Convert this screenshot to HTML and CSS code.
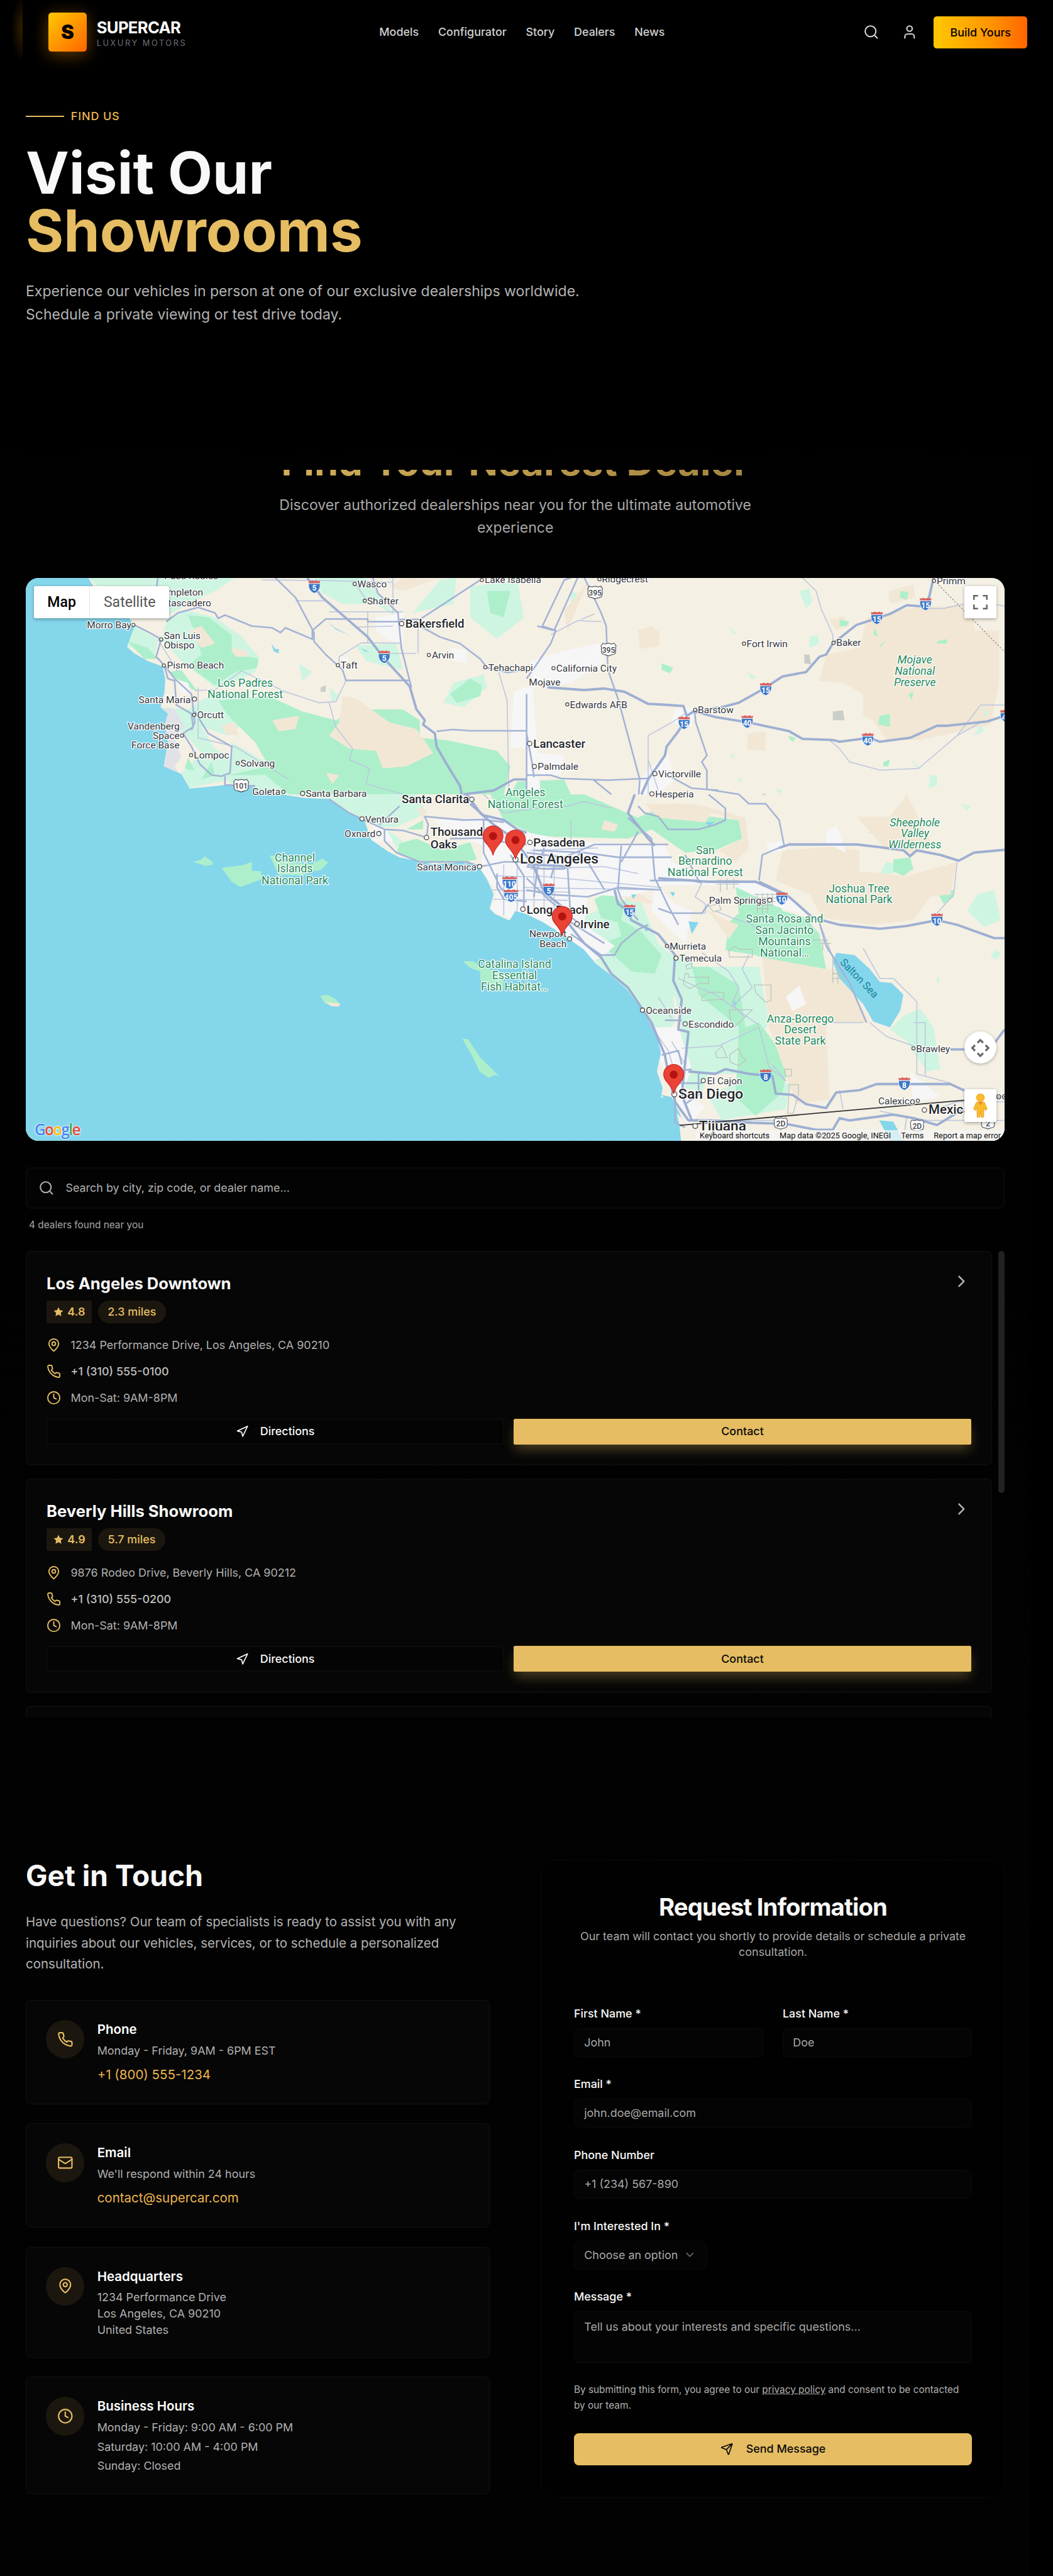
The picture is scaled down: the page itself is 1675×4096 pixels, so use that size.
FILE: index.html
```html
<!DOCTYPE html>
<html lang="en">
<head>
<meta charset="utf-8">
<title>Supercar Luxury Motors – Dealers</title>
<link rel="stylesheet" href="styles.css">
</head>
<body>
<svg class="defs" width="0" height="0" aria-hidden="true">
  <symbol id="i-search" viewBox="0 0 24 24"><circle cx="11" cy="11" r="8"/><path d="m21 21-4.3-4.3"/></symbol>
  <symbol id="i-user" viewBox="0 0 24 24"><path d="M19 21v-2a4 4 0 0 0-4-4H9a4 4 0 0 0-4 4v2"/><circle cx="12" cy="7" r="4"/></symbol>
  <symbol id="i-pin" viewBox="0 0 24 24"><path d="M20 10c0 4.99-5.54 10.19-7.4 11.8a1 1 0 0 1-1.2 0C9.54 20.19 4 14.99 4 10a8 8 0 0 1 16 0"/><circle cx="12" cy="10" r="3"/></symbol>
  <symbol id="i-phone" viewBox="0 0 24 24"><path d="M22 16.92v3a2 2 0 0 1-2.18 2 19.79 19.79 0 0 1-8.63-3.07 19.5 19.5 0 0 1-6-6 19.79 19.79 0 0 1-3.07-8.67A2 2 0 0 1 4.11 2h3a2 2 0 0 1 2 1.72 12.84 12.84 0 0 0 .7 2.81 2 2 0 0 1-.45 2.11L8.09 9.91a16 16 0 0 0 6 6l1.27-1.27a2 2 0 0 1 2.11-.45 12.84 12.84 0 0 0 2.81.7A2 2 0 0 1 22 16.92z"/></symbol>
  <symbol id="i-clock" viewBox="0 0 24 24"><circle cx="12" cy="12" r="10"/><path d="M12 6v6l4 2"/></symbol>
  <symbol id="i-mail" viewBox="0 0 24 24"><rect x="2" y="4" width="20" height="16" rx="2"/><path d="m22 7-8.97 5.7a1.94 1.94 0 0 1-2.06 0L2 7"/></symbol>
  <symbol id="i-nav" viewBox="0 0 24 24"><path d="M3 11 22 2l-9 19-2-8z"/></symbol>
  <symbol id="i-send" viewBox="0 0 24 24"><path d="M14.54 21.69a.5.5 0 0 0 .93-.03l6.5-19a.5.5 0 0 0-.63-.63l-19 6.5a.5.5 0 0 0-.03.93l7.93 3.18a2 2 0 0 1 1.11 1.11zM21.85 2.15 10.91 13.09"/></symbol>
  <symbol id="i-right" viewBox="0 0 24 24"><path d="m9 18 6-6-6-6"/></symbol>
  <symbol id="i-down" viewBox="0 0 24 24"><path d="m6 9 6 6 6-6"/></symbol>
  <symbol id="i-star" viewBox="0 0 24 24"><path d="m12 2 3.09 6.26L22 9.27l-5 4.87 1.18 6.88L12 17.77l-6.18 3.25L7 14.14 2 9.27l6.91-1.01z"/></symbol>
  <symbol id="shield" viewBox="0 0 16 17" overflow="visible"><path d="M1 4.5H15C16 10 13 14.500 8 16.500 3 14.500 0 10 1 4.500z" fill="#3b78c9" stroke="#f3f6fb" stroke-width=".7"/><path d="M1 4V.8L3 1.800 5 .5 8 1.500 11 .5 13 1.800 15 .8V4z" fill="#d9625f"/></symbol>
  <symbol id="us" viewBox="0 0 20 17" overflow="visible"><path d="M3 .7 6 1.700 10 .7 14 1.700 17 .7 19.300 4C17.500 7 20.500 11 17.500 14 14 15.500 12 15 10 16.500 8 15 6 15.500 2.500 14-.5 11 2.500 7 .7 4z" fill="#fff" stroke="#555b63" stroke-width="1"/></symbol>
  <symbol id="marker" viewBox="0 0 26 37" overflow="visible"><path d="M13 .5C6 .5 .5 6 .5 13 .5 22 10.500 25 13 37 15.500 25 25.500 22 25.500 13 25.500 6 20 .5 13 .5z" fill="#ea4335" stroke="#c5221f" stroke-width=".8"/><circle cx="13" cy="13" r="5" fill="#b31412"/></symbol>
</svg>

<header class="header">
  <span class="edge-glow"></span>
  <div class="brand">
    <div class="logo">S</div>
    <div class="brand-text"><b>SUPERCAR</b><span>LUXURY MOTORS</span></div>
  </div>
  <nav class="nav"><a>Models</a><a>Configurator</a><a>Story</a><a>Dealers</a><a>News</a></nav>
  <div class="actions">
    <span class="icon-btn"><svg class="icon s20"><use href="#i-search"/></svg></span>
    <span class="icon-btn"><svg class="icon s20"><use href="#i-user"/></svg></span>
    <a class="build">Build Yours</a>
  </div>
</header>

<main class="main">
  <section class="hero">
    <div class="eyebrow"><i></i>FIND US</div>
    <h1>Visit Our<br><span>Showrooms</span></h1>
    <p>Experience our vehicles in person at one of our exclusive dealerships worldwide. Schedule a private viewing or test drive today.</p>
  </section>

  <section class="dealers">
    <div class="section-head">
      <h2>Find Your Nearest Dealer</h2>
      <p>Discover authorized dealerships near you for the ultimate automotive experience</p>
    </div>

    <div class="map">
      <svg class="map-art" viewBox="0 0 1216 699" preserveAspectRatio="none">
        <rect width="1216" height="699" fill="#f5f0e4"/>
        <!-- upper half terrain -->
        <g class="terrain" transform="matrix(.41708 0 0 .27211 -32 -158)">
          <g class="lg">
            <path d="M263 580H700L640 640 560 700 490 760 400 760z"/>
            <path d="M400 800 470 860 460 950 380 890z"/>
            <path d="M500 760 560 730 640 760 720 850 770 940 760 1010 690 1060 640 1080 540 960 480 860z"/>
            <path d="M480 1170 560 1180 640 1100 740 1120 760 1200 680 1300 600 1260 640 1360 690 1400 680 1500 565 1540 540 1470 600 1380z"/>
            <path d="M930 580H1090L1180 760 1120 700 1020 700 960 650zM1060 890 1180 880 1200 1000 1090 960z"/>
            <path d="M1310 590 1360 580 1350 700 1230 740zM1400 620 1540 590 1560 760 1480 860 1400 760z"/>
            <path d="M1350 1060 1440 1020 1450 1080 1380 1170 1320 1150zM890 970 930 1010 900 1050zM980 1080 1010 1120 990 1150z"/>
            <path d="M690 1330 860 1480 960 1568H700L680 1500z"/>
          </g>
          <g class="gr">
            <path d="M560 750 620 760 690 840 690 920 770 950 765 990 700 1010 640 1070 560 980 600 930 580 830z"/>
            <path d="M380 870 440 900 470 950 430 950zM500 1010 560 1080 590 1100 540 1000z"/>
            <path d="M650 1140 800 1120 900 1190 1000 1230 1060 1180 1200 1180 1250 1230 1250 1310 1330 1320 1480 1370 1520 1440 1500 1568H860L790 1480 680 1480 800 1440 760 1330 680 1210z"/>
            <path d="M1400 1040 1435 1070 1430 1120 1360 1150 1340 1110zM1450 640 1520 640 1500 760 1460 740z"/>
            <path d="M560 1400 580 1460 550 1450zM630 1420 640 1480 600 1500zM1540 1510 1680 1500 1700 1568H1520z"/>
          </g>
          <g class="tan">
            <path d="M1020 1120 1060 1130 1160 1240 1240 1270 1290 1380 1210 1440 1140 1450 1120 1370 1040 1360 980 1300 1010 1240z"/>
            <path d="M810 1230 890 1210 880 1270 830 1280zM690 900 730 910 740 940 700 940zM660 1250 700 1240 710 1300 670 1290zM970 1470 1010 1480 990 1520zM560 820 600 800 640 880 600 900z"/>
            <path d="M1160 620 1200 580 1290 590 1200 640zM1900 820 1940 800 1964 830V890L1905 905z"/>
            <path d="M2460 930 2560 900 2580 760 2700 720 2900 700 2900 820 2975 820 2975 1060 2950 1250 2740 1320 2640 1320 2600 1230 2570 1210 2570 1110 2510 1060 2440 1050z"/>
            <path d="M2645 640 2720 610 2725 670 2650 700zM2470 770 2510 755 2530 800 2490 820zM2225 1290 2280 1280V1370L2225 1365zM1680 730 1750 600 1690 820z"/>
          </g>
          <g class="ur">
            <path d="M1120 760 1200 740 1200 880 1150 860 1120 820zM1340 900 1390 910 1390 970 1350 960zM1010 930 1040 950 1020 990zM1580 960 1640 930 1720 900 1790 880 1800 960 1700 1060 1560 1080 1530 1100 1520 1350 1568 1360 1568 1568H1610L1600 1380 1680 1390 1670 1480 1600 1490V1340z"/>
            <path d="M1900 1500 1990 1380 2010 1500 1960 1568H1900zM2010 1180 2070 1170 2060 1260 2000 1240zM520 1040 560 1060 570 1110 540 1110z"/>
          </g>
          <g class="base"><path d="M492 1170 520 1180 550 1260 520 1310 540 1400 520 1440 560 1540 490 1440 500 1330 490 1230z"/></g>
          <g class="grey"><path d="M955 1080 970 1070 970 1100 955 1100zM2395 930 2410 930 2415 975 2395 970zM2480 1190 2510 1185 2515 1230 2480 1230z"/></g>
          <g class="gr">
            <path d="M2680 640 2705 645 2700 680 2680 670zM2500 770 2530 780 2520 800 2500 800zM2605 810 2615 850 2600 840zM2620 890 2640 860 2620 900zM2790 870 2820 860 2820 880 2790 880zM2620 1210 2650 1200 2650 1260 2615 1250zM2705 1110 2720 1100 2715 1140zM2630 1420 2650 1410 2645 1440 2630 1440zM1970 970 2005 990 1995 1015 1970 1000zM2345 1300 2370 1310 2360 1330z"/>
          </g>
          <g class="lg">
            <path d="M2380 640 2410 630 2420 690 2400 720zM2410 850 2435 840 2440 880 2410 900zM2170 800 2190 830 2185 840zM2225 1010 2250 1030 2240 1045zM1700 640 1720 650 1700 700zM2180 1380 2190 1400 2175 1400zM2930 1180 2945 1190 2930 1220zM2920 1250 2930 1280 2900 1300zM2770 1480 2790 1480 2790 1530 2765 1540zM2710 1400 2740 1450 2730 1450zM2195 1490 2210 1500 2205 1520zM2310 1540 2330 1550 2320 1568z"/>
          </g>
          <g class="wt"><path d="M808 880 820 905H830V925L815 915zM975 780 1000 810 1045 845 1000 815zM1075 900 1100 920 1085 915zM950 760 972 780z"/></g>
        </g>
        <!-- lower half terrain -->
        <g class="terrain" transform="matrix(.41708 0 0 .2891 -32 268.7)">
          <g class="lg">
            <path d="M860 0H1240L1270 80 1180 140 1130 140 1040 80 980 20zM1150 150 1200 200 1180 230z"/>
            <path d="M1568 620 1900 430 1960 640 2010 700 2060 700 2080 850 2200 1000 2190 1200 2060 1200 2020 1140 2030 1000 2010 860 1940 1020 1850 800 1800 720 1730 650 1760 560z"/>
            <path d="M1700 620 1850 560 1900 700 2000 740 2010 980 1950 1060 1890 900 1830 790z"/>
            <path d="M2100 740 2260 740 2290 980 2260 1050 2120 1000zM2110 1300 2200 1230 2350 1240 2340 1350 2150 1400zM2040 1180 2110 1190 2090 1280 2040 1260z"/>
            <path d="M2690 950 2740 920 2780 1000 2800 1180 2760 1190 2700 1060 2650 1010zM2910 430 2960 410 2980 540 2930 570 2880 500zM2960 670 2980 680 2970 710 2950 700zM2640 290 2670 300 2660 340 2620 340zM2790 780 2800 790 2790 815zM2860 40 2890 50 2880 70z"/>
          </g>
          <g class="gr">
            <path d="M1460 0H1740L1900 100 1960 60 2030 80 2200 110 2210 190 2130 240 2040 250 1990 200 1940 150 1870 190 1600 180 1500 110z"/>
            <path d="M1190 210 1240 190 1320 240 1400 205 1420 280 1380 290 1250 295 1180 250zM1210 150 1260 110V150z"/>
            <path d="M1770 450 1810 420 1860 470 1850 540 1910 590 1970 690 1950 770 1880 760 1820 680 1790 640 1850 610 1840 550 1790 530z"/>
            <path d="M2190 390 2240 380 2310 440 2330 500 2400 530 2440 600 2460 750H2340L2250 690 2160 670 2170 550 2200 510z"/>
            <path d="M2060 740 2110 740 2200 820 2220 1000 2260 980 2350 1150 2330 1280 2250 1380 2190 1300 2200 1000 2080 860z"/>
            <path d="M2660 280 2710 270 2720 320 2690 350 2660 330zM2790 420 2840 410 2840 440 2810 470zM2660 380 2760 380 2750 390 2670 395zM2585 100 2600 100 2605 150 2590 170zM1750 350 1790 340 1780 400z"/>
          </g>
          <g class="tan">
            <path d="M1920 40 2060 40 2120 60 2220 100 2230 230 2190 290 2140 240 2210 190 2200 110 2120 80 2100 120 1960 100zM1800 110 1840 130 1830 160 1790 150zM1240 50 1270 70 1260 110z"/>
            <path d="M2330 240 2480 225 2560 240 2560 330 2700 350 2850 290 2830 430 2770 440 2720 540 2600 560 2450 530 2410 430 2310 370z"/>
            <path d="M2270 700 2460 750 2500 750 2540 840 2590 980 2460 980 2470 1310 2370 1330 2340 1200 2290 1000zM2550 95H2650L2700 0 2770 200 2740 250 2640 240zM2090 480 2160 540 2200 560 2170 620 2120 520zM1840 430 1900 420 1950 470 1880 460z"/>
          </g>
          <g class="ur">
            <path d="M1290 110 1420 100 1480 90 1560 160 1700 200 1980 220 2000 290 2120 370 2240 380 2340 430 2400 520 2310 480 2180 390 1980 390 1870 440 1750 430 1740 560 1830 650 1800 690 1760 720 1700 620 1620 550 1560 510 1530 540 1460 500 1480 430 1430 310 1440 220 1340 170z"/>
            <path d="M1950 380 2010 470 2060 500 2040 640 2010 600 1940 500zM1920 1000 2020 1000 2060 1180 2030 1280 2100 1340 2050 1430 2010 1290 1970 1160zM2280 210 2340 200 2340 240 2290 250zM2460 160 2490 130 2520 250 2460 210zM2340 870 2380 820 2400 900 2360 930zM1110 130 1150 150 1170 200 1110 200zM2710 1190 2800 1300 2720 1320z"/>
          </g>
        </g>
        <!-- ocean, islands and lakes -->
        <path class="wt" d="M77.700 0 89 19 128.600 50 135 60 130.700 72 125.700 85.500 134.800 93.700 151.500 103 170 110 173.200 125 172.400 141.300 167.400 160.400 176.500 168.500 172.400 182 176.500 204 171.500 233.800 193.200 243.400 203.700 261.600 247.400 257 280.800 259.700 318 268.700 345.500 273 376.700 274.500 401.800 291.800 420.500 300.500 428.900 325 449.700 339.500 464.300 346.800 506 355.400 547.800 352.500 562.300 358.300 572.800 374.200 581.100 393 576.100 410.400 583.200 417.600 600.700 425.400 608.200 413.300 622 417.600 642.900 427.700 667.900 443.600 692.900 461 707.500 478.300 726.300 492.800 747.100 511.500 765.900 537.600 782.600 563.600 788.800 589.600 783.800 612.700 790.900 633 788.800 644.500 805.500 650.300 811.800 679.200 813.900 699H0V0z"/>
        <g transform="matrix(.41708 0 0 .2891 -32 268.7)">
          <path class="gr" d="M575 290 600 280 610 266 633 290V302L612 307zM660 315 720 305 750 290V328L778 330V365L740 385 716 398 690 375zM803 262 830 265 850 290 930 300 960 275 977 293 955 325 930 330 900 348 830 345 815 300zM953 865 975 860 1000 880 1014 902 970 900zM1377 1050H1393L1430 1130 1487 1210 1475 1205 1455 1216 1428 1190 1405 1120zM1378 715 1410 717 1430 740 1480 760 1500 800 1498 845 1430 800V760L1400 745z"/>
          <path class="tan" d="M970 892 1010 897 1014 904 1005 912 985 909z"/>
          <path class="wt" d="M2490 680 2545 690 2590 750 2620 805 2655 810 2690 860 2680 930 2650 1000 2600 975 2570 900 2500 790 2480 720zM1915 570 1935 575 1925 590zM2050 545 2080 550 2060 600zM1880 430 1895 430 1885 450zM1995 420 2010 420 2005 440zM2100 120 2130 118 2110 135zM2180 885 2195 895 2190 910zM2618 1400 2660 1405 2690 1487H2650zM1968 1290 2000 1300 2030 1390 2010 1360z"/>
        </g>
        <!-- secondary roads -->
        <g class="rd thin" transform="matrix(.41708 0 0 .27211 -32 -158)">
          <path d="M580 1095 640 1090 720 1005 850 1100 950 1150 1000 1145 1030 1050M980 1150 1000 1260 1050 1360 1040 1410 1100 1450 1090 1520 1200 1568M470 860 530 1010M780 590 960 592 1170 600M1170 580 1170 740M880 685 970 685M1095 735V880M980 735H1200M1060 805 1170 800M1010 940 1075 877 1190 878M1010 940V980M1145 925H1240M1245 810V925M1055 600 1090 680M590 1080V1310L700 1350 860 1500"/>
          <path d="M1485 1010 1510 1140 1515 1568M2390 580 2430 640 2445 720 2480 840 2480 880M2270 1568 2280 1568M1640 840 1720 775 1790 780M1730 770 1770 745M2470 1320 2500 1360 2530 1420 2620 1457 2735 1450 2850 1300 2920 1240M2850 1300 2920 1160H2991M1930 1568 1930 1300 2000 1240 2040 1200M2750 720 2810 720 2870 700M2960 700 2991 710M1930 1410 1960 1550"/>
        </g>
        <g class="rd thin" transform="matrix(.41708 0 0 .2891 -32 268.7)">
          <path d="M1440 0 1500 80 1590 60 1690 50 1740 30 1820 60M1700 200V110M1580 240 1780 230M1580 320 1800 310 1900 340M1600 350 1970 400M1560 400 1960 410M1590 200V500M1620 200V500M1650 270V540M1500 300V520M1540 290V500M1470 350 1600 355M1460 410 1700 420M1470 450 1690 455M2050 510 2100 510V470L2070 440 2090 380M2090 680 2170 760 2200 830 2180 900 2220 960M2020 790 2080 830 2130 860 2190 920 2260 990M2180 910 2240 830 2210 750 2230 690M2130 500 2180 530 2240 560 2300 640 2290 700M2850 290 2840 430 2790 510M2440 550 2480 700 2510 750M2570 660 2620 790 2660 790 2730 890 2730 1200 2780 1220M2570 980H2480M2590 980 2640 1040 2720 1080M2500 1270 2510 1350M2720 980H2755V1210L2830 1240M2030 1090 2140 1080 2260 1000 2290 1170 2340 1230 2300 1160M2000 1060 2040 1160M1930 980 1990 1100 2020 1250M1960 870 2000 960M2620 1360 2760 1400 2991 1400M2790 1350 2850 1320H2991M2700 1380 2690 1487M2200 1400 2330 1400"/>
        </g>
        <!-- reservation outlines -->
        <g class="rsv" transform="matrix(.41708 0 0 .2891 -32 268.7)">
          <path d="M2170 670 2190 652 2200 665H2240V698H2172zM2246 818H2296V885L2280 893 2250 850zM2040 770H2050V785H2110V812H2080L2055 835 2035 815zM2090 870 2110 850 2155 850V880L2090 885zM2172 925H2240L2215 960 2185 1000 2175 970zM2130 1110 2150 1080 2165 1130 2135 1130zM2172 1120 2200 1090 2210 1130 2222 1140 2200 1165 2175 1150zM2336 1180H2356V1210H2340zM2350 1247H2378V1280L2362 1370H2346zM2042 735 2060 725V745L2045 750zM2110 480 2140 470 2148 495 2125 505z"/>
          <path d="M2246 430H2310M2246 445H2310M2246 460H2310M2250 475H2300M2252 490H2290M2255 425V510M2270 425V515M2285 425V510M2300 425V480M2480 690V810M2495 750V815M2478 770H2510M2478 790H2515M2132 370H2200M2132 385H2200M2145 365V420M2165 360V410M2185 360V405M2420 625H2465M2440 640H2475M2450 625V670M2465 640V675"/>
        </g>
        <!-- highways -->
        <g class="rd" transform="matrix(.41708 0 0 .27211 -32 -158)">
          <path d="M470 580 465 640M400 795 445 830 480 860 465 940 490 980 520 1040 570 1110 580 1240 570 1275M490 985 500 1040 520 1050 525 1160 570 1200 575 1260 545 1290 570 1350 595 1430 630 1480 660 1485 685 1470 690 1350 620 1290 580 1190M495 780 530 740 590 715 640 740 650 765 670 750 750 800 810 808 835 830 850 808 930 860 930 820 970 768H1095V780H1190M820 580 880 670 935 830 935 870 970 930 1020 1000 1030 1048H1220M670 1485V1525L760 1530M1110 580 1125 650 1185 740 1195 900 1225 1080M1190 770 1250 770 1310 710 1360 660 1430 590M1250 800 1310 850 1370 880 1430 950 1450 990 1510 1012 1568 1000M1300 1280 1350 1272 1400 1278H1568M1568 1110V1568M1600 800 1650 820 1720 580M1700 580 1680 590 1615 800 1655 820 1640 880 1600 970 1568 1040M1740 580 1790 740 1805 800 1810 1000 1840 1130 1905 1500 1902 1568M1568 1290 1585 1430 1590 1490M1568 1480 1640 1480 1670 1495 1810 1503 1930 1495M2068 1190 2072 1240 2105 1390 2090 1420 2105 1460V1545L2200 1568M2000 1490 2060 1540 2140 1550M1768 1503 1820 1568"/>
        </g>
        <g class="rd" transform="matrix(.41708 0 0 .2891 -32 268.7)">
          <path d="M980 20 1040 80 1100 120 1145 150 1200 155 1270 185M1145 150V200L1180 250 1250 290 1390 290 1430 310M1130 130 1190 50M1270 185 1275 130 1265 95 1380 110 1440 108 1500 120M1340 190 1440 188 1500 205 1568 215M1440 110V250L1470 340 1490 400 1530 450M1430 310 1500 290 1568 290M1520 260 1560 350V500M1480 340V400L1500 450 1568 460M1568 250 1680 270 1770 215H1990M1590 240 1740 250 1840 270H2000M1568 410 1640 430 1750 440 1840 400 1970 410M1568 310 1620 320 1680 320 1730 250M1690 310 1700 550 1800 640M1568 360 1640 460 1730 560M1620 230 1600 320 1590 440M1660 260 1640 360M1750 290 1800 410M1850 220 1840 410 1850 450 1900 540M1900 160 1850 290M1870 100 1940 190 1950 360 1990 480 2020 560M1900 50 1920 80 1960 95 1990 150 2080 150 2130 130 2160 110 2160 60 2110 0M1935 370 2060 370 2090 380M2040 260 2080 370M2200 0 2230 40 2280 40 2320 110 2335 220 2270 260 2260 370M1700 600 1790 690 1830 690 1850 640 1900 580 1930 560M1960 490 2000 510 2090 510 2110 470M1980 970 2000 970 2030 970M1970 1120 2020 1100 2030 1160M2010 1190 2060 1180M1990 1240 2090 1240M2010 1210V1410L2040 1430M2080 1190V1290L2040 1330M2440 550 2460 650 2530 810 2580 980"/>
        </g>
        <g class="rd wide" transform="matrix(.41708 0 0 .27211 -32 -158)">
          <path d="M915 580 960 670 1095 850 1145 950 1220 1075 1240 1180 1265 1230 1260 1250 1295 1290 1300 1350 1330 1430 1370 1530 1375 1568M1380 1568 1470 1550 1530 1500 1568 1500M1630 1080 1740 1092 1800 1085 1860 1100 1930 1155 1970 1158 2035 1165 2045 1210 2070 1185 2150 1170 2200 1150 2270 1090 2330 1030 2400 1010 2440 940 2460 930 2480 880 2550 795 2650 745 2700 705 2760 712 2780 580M2070 1190 2130 1215 2230 1240 2350 1280 2390 1315 2480 1320 2500 1328 2590 1310 2620 1328 2710 1310 2790 1255H2820L2940 1235 2991 1210M2045 1220 2020 1280 1985 1350 1980 1390 1930 1500 1910 1568"/>
        </g>
        <g class="rd wide" transform="matrix(.41708 0 0 .2891 -32 268.7)">
          <path d="M1390 0 1430 80 1470 130 1530 190 1590 310 1620 420 1690 500 1690 550 1740 640 1790 700 1820 770 1870 830 1940 980 1980 1120 1990 1200 2010 1320 2050 1400 2110 1400 2240 1410M1400 40 1440 90 1500 110 1540 150 1568 165M1570 300 1700 310M1890 0 1870 80 1930 190 1950 220M1960 360 2110 375 2250 375 2350 440 2420 530 2500 560 2620 577 2700 565 2790 540 2850 560 2960 617H2991M2260 375 2340 430M2320 230 2350 215H2550L2610 225 2690 240 2710 265 2730 240 2800 260 2855 285 2900 250 2991 238M1830 410 1840 470 1870 500 1880 540 1960 600 2010 690 2005 800 2030 880 2020 1010 2050 1020 2030 1290 2060 1400M2050 1190 2130 1200 2160 1180 2230 1200 2300 1210 2310 1285 2360 1290 2400 1330 2460 1347 2490 1280 2560 1270 2610 1244H2830L2900 1290M2240 1410 2340 1415 2430 1440 2480 1440 2500 1390 2530 1400 2660 1375 2720 1390 2790 1420 2870 1350M2940 1110 2991 1010M2830 1095H2890"/>
        </g>
        <path d="M812 679.500 1216 644" stroke="#333" stroke-width="1.400" fill="none"/>
        <path d="M1131 6 1216 92" stroke="#8a8a8a" stroke-dasharray="2 2" fill="none"/>

        <g class="dots">
          <circle cx="133.600" cy="58.300" r="2"/><circle cx="168.200" cy="76.300" r="2"/><circle cx="171.500" cy="108.700" r="2"/><circle cx="209.500" cy="150.300" r="2.600"/><circle cx="209" cy="170" r="2"/><circle cx="194" cy="195.700" r="2"/><circle cx="205.300" cy="220" r="2"/><circle cx="263.300" cy="230" r="2"/><circle cx="320" cy="265.500" r="2"/><circle cx="343.800" cy="267.500" r="2.600"/><circle cx="408.400" cy="7.400" r="2"/><circle cx="421" cy="28.300" r="2"/><circle cx="466.800" cy="56.700" r="2.800"/><circle cx="500.600" cy="95.600" r="2"/><circle cx="387.600" cy="108.300" r="2"/><circle cx="570.700" cy="110.800" r="2"/><circle cx="566.500" cy="2.500" r="2"/>
          <circle cx="712.500" cy="1.500" r="2"/><circle cx="1128" cy="3.500" r="2"/><circle cx="892" cy="81.500" r="2"/><circle cx="1003.200" cy="80.500" r="2"/><circle cx="655.400" cy="112" r="2"/><circle cx="672.500" cy="157" r="2"/><circle cx="831.400" cy="163.700" r="2"/><circle cx="625.800" cy="205.500" r="2.800"/><circle cx="631.600" cy="234" r="2.600"/><circle cx="781.300" cy="243" r="2.600"/><circle cx="777.600" cy="268" r="2.600"/>
          <circle cx="417.600" cy="299" r="2.600"/><circle cx="438.500" cy="317.300" r="2.600"/><circle cx="554" cy="274.800" r="2.800"/><circle cx="497.700" cy="322.200" r="2.800"/><circle cx="563.600" cy="358.300" r="2.600"/><circle cx="608.200" cy="349.400" r="3.200"/><circle cx="626.200" cy="328.300" r="2.800"/><circle cx="617.400" cy="411.200" r="2.800"/><circle cx="684.600" cy="429.500" r="2.800"/><circle cx="675.400" cy="448" r="2.600"/><circle cx="924" cy="400" r="2.600"/><circle cx="796.300" cy="457" r="2"/><circle cx="807.600" cy="472" r="2.600"/><circle cx="765.900" cy="536.500" r="2.600"/><circle cx="818.900" cy="553.500" r="2.600"/><circle cx="841.400" cy="624" r="2.600"/><circle cx="805.500" cy="641" r="3.200"/><circle cx="831.400" cy="680.400" r="3"/><circle cx="1102.500" cy="584" r="2"/><circle cx="1107.900" cy="649" r="2"/><circle cx="1116" cy="660.500" r="2.800"/>
        </g>
        <g class="lb">
          <text x="172" y="1.700">Paso Robles</text><text x="220.300" y="22.100" class="e">Templeton</text><text x="230.300" y="35.200" class="e">Atascadero</text><text x="131" y="62.400" class="e">Morro Bay</text><text x="171.500" y="75.500">San Luis</text><text x="171.500" y="87.500">Obispo</text><text x="175.300" y="112.500">Pismo Beach</text><text x="204.900" y="155" class="e">Santa Maria</text><text x="212.800" y="174.200">Orcutt</text><text x="191.100" y="187.900" class="e">Vandenberg</text><text x="191.100" y="199.800" class="e">Space</text><text x="191.100" y="211.800" class="e">Force Base</text><text x="208.700" y="224.300">Lompoc</text><text x="266.600" y="234.100">Solvang</text><text x="316.300" y="269.300" class="e">Goleta</text><text x="347.600" y="272.100">Santa Barbara</text><text x="411.800" y="11.800">Wasco</text><text x="423.900" y="32.500">Shafter</text><text x="504.400" y="100">Arvin</text><text x="390.900" y="112.700">Taft</text><text x="574.400" y="115.200">Tehachapi</text><text x="569.900" y="6.600">Lake Isabella</text>
          <text x="715.400" y="5.800">Ridgecrest</text><text x="1131.300" y="7.700">Primm</text><text x="895.200" y="85.800">Fort Irwin</text><text x="1006.600" y="84.700">Baker</text><text x="658.700" y="116.300">California City</text><text x="624.900" y="133.700">Mojave</text><text x="675.800" y="161.500">Edwards AFB</text><text x="834.700" y="168">Barstow</text><text x="635.800" y="238.200">Palmdale</text><text x="785.500" y="247.200">Victorville</text><text x="781.700" y="272.200">Hesperia</text>
          <text x="421.400" y="304">Ventura</text><text x="434.300" y="321.900" class="e">Oxnard</text><text x="559.800" y="362.700" class="e">Santa Monica</text><text x="671.600" y="445.900" class="e">Newport</text><text x="671.600" y="458" class="e">Beach</text><text x="919.800" y="404.600" class="e">Palm Springs</text><text x="799.700" y="461.500">Murrieta</text><text x="811.800" y="476.300">Temecula</text><text x="770" y="541">Oceanside</text><text x="823" y="558.100">Escondido</text><text x="846" y="628.300">El Cajon</text><text x="1105.800" y="588.700">Brawley</text><text x="1104.600" y="653.500" class="e">Calexico</text><text x="1205" y="647">ood</text>
        </g>
        <g class="lb md">
          <text x="471.400" y="61.900">Bakersfield</text><text x="630.300" y="210.700">Lancaster</text><text x="550.700" y="279.700" class="e">Santa Clarita</text><text x="502.700" y="320.400">Thousand</text><text x="502.700" y="335.500">Oaks</text><text x="630.300" y="333.500">Pasadena</text><text x="622" y="416.700">Long Beach</text><text x="688.700" y="434.900">Irvine</text>
        </g>
        <g class="lb lgc"><text x="613.600" y="354.600">Los Angeles</text><text x="810.500" y="646.800">San Diego</text><text x="836" y="686.300">Tijuana</text><text x="1121.200" y="665.600" class="mx">Mexicali</text></g>
        <g class="lb park">
          <text x="272.500" y="135">Los Padres</text><text x="272.500" y="149.200">National Forest</text><text x="620.500" y="271">Angeles</text><text x="620.500" y="285.500">National Forest</text><text x="334.200" y="352">Channel</text><text x="334.200" y="365.800">Islands</text><text x="334.200" y="380">National Park</text><text x="607" y="484.400">Catalina Island</text><text x="607" y="498.200">Essential</text><text x="607" y="512.400">Fish Habitat…</text><text x="843.900" y="342.400">San</text><text x="843.900" y="356.300">Bernardino</text><text x="843.900" y="370.200">National Forest</text><text x="1034.900" y="390.100">Joshua Tree</text><text x="1034.900" y="403.700">National Park</text><text x="942.300" y="427.700">Santa Rosa and</text><text x="942.300" y="441.600">San Jacinto</text><text x="942.300" y="455.700">Mountains</text><text x="942.300" y="469.900">National…</text><text x="961.900" y="551.700">Anza-Borrego</text><text x="961.900" y="565.600">Desert</text><text x="961.900" y="579.500">State Park</text>
          <g font-style="italic"><text x="1104.200" y="106.200">Mojave</text><text x="1104.200" y="120.400">National</text><text x="1104.200" y="134.500">Preserve</text><text x="1104.200" y="308.300">Sheephole</text><text x="1104.200" y="321.900">Valley</text><text x="1104.200" y="336">Wilderness</text></g>
        </g>
        <text class="salton" transform="translate(1032 500) rotate(46)">Salton Sea</text>
        <g class="sh">
          <g transform="translate(358.400 11)"><use href="#shield" x="-8" y="-8.500" width="16" height="17"/><text y="5">5</text></g>
          <g transform="translate(445.200 98)"><use href="#shield" x="-8" y="-8.500" width="16" height="17"/><text y="5">5</text></g>
          <g transform="translate(1117.500 32.500)"><use href="#shield" x="-8" y="-8.500" width="16" height="17"/><text y="5">15</text></g>
          <g transform="translate(1057 49.700)"><use href="#shield" x="-8" y="-8.500" width="16" height="17"/><text y="5">15</text></g>
          <g transform="translate(919 138)"><use href="#shield" x="-8" y="-8.500" width="16" height="17"/><text y="5">15</text></g>
          <g transform="translate(817.600 180)"><use href="#shield" x="-8" y="-8.500" width="16" height="17"/><text y="5">15</text></g>
          <g transform="translate(896 178.500)"><use href="#shield" x="-8" y="-8.500" width="16" height="17"/><text y="5">40</text></g>
          <g transform="translate(1045.800 200.500)"><use href="#shield" x="-8" y="-8.500" width="16" height="17"/><text y="5">40</text></g>
          <g transform="translate(1217.500 171.500)"><use href="#shield" x="-8" y="-8.500" width="16" height="17"/><text y="5">40</text></g>
          <g transform="translate(600.700 378.500) scale(1.250 1)"><use href="#shield" x="-8" y="-8.500" width="16" height="17"/></g><text x="600.700" y="383.500">110</text>
          <g transform="translate(602.800 394.700) scale(1.250 1)"><use href="#shield" x="-8" y="-8.500" width="16" height="17"/></g><text x="602.800" y="399.700">405</text>
          <g transform="translate(649.500 387)"><use href="#shield" x="-8" y="-8.500" width="16" height="17"/><text y="5">5</text></g>
          <g transform="translate(750 413.500)"><use href="#shield" x="-8" y="-8.500" width="16" height="17"/><text y="5">15</text></g>
          <g transform="translate(939 398)"><use href="#shield" x="-8" y="-8.500" width="16" height="17"/><text y="5">10</text></g>
          <g transform="translate(1131.700 424.300)"><use href="#shield" x="-8" y="-8.500" width="16" height="17"/><text y="5">10</text></g>
          <g transform="translate(919 618)"><use href="#shield" x="-8" y="-8.500" width="16" height="17"/><text y="5">8</text></g>
          <g transform="translate(1091.200 628)"><use href="#shield" x="-8" y="-8.500" width="16" height="17"/><text y="5">8</text></g>
        </g>
        <g class="sh dark">
          <g transform="translate(267.500 257.800)"><use href="#us" x="-10" y="-8.500" width="20" height="17"/><text y="4">101</text></g>
          <g transform="translate(707.100 18)"><use href="#us" x="-10" y="-8.500" width="20" height="17"/><text y="4">395</text></g>
          <g transform="translate(723.800 88.800)"><use href="#us" x="-10" y="-8.500" width="20" height="17"/><text y="4">395</text></g>
          <g transform="translate(937.700 677.200)"><use href="#us" x="-9" y="-8.500" width="18" height="17"/><text y="4">2D</text></g>
          <g transform="translate(1107 679.800)"><use href="#us" x="-9" y="-8.500" width="18" height="17"/><text y="4">2D</text></g>
          <g transform="translate(1195 676.900)"><use href="#us" x="-9" y="-8.500" width="18" height="17"/><text y="4">2</text></g>
        </g>
        <use href="#marker" x="567.300" y="307.400" width="26" height="37"/>
        <use href="#marker" x="595.200" y="312.400" width="26" height="37"/>
        <use href="#marker" x="653.200" y="407.200" width="26" height="37"/>
        <use href="#marker" x="791.700" y="603.500" width="26" height="37"/>
      </svg>
      <div class="map-type"><b>Map</b><span>Satellite</span></div>
      <div class="map-btn full"><svg viewBox="0 0 18 18" width="18" height="18"><path d="M0 0v6h2V2h4V0zM16 0h-4v2h4v4h2V0zM16 16h-4v2h6v-6h-2zM2 12H0v6h6v-2H2z" fill="#666"/></svg></div>
      <div class="map-btn pan"><svg viewBox="0 0 24 24" width="24" height="24"><path d="M8.500 5.500 12 2l3.500 3.500M8.500 18.500 12 22l3.500-3.500M5.500 8.500 2 12l3.500 3.500M18.500 8.500 22 12l-3.500 3.500" fill="none" stroke="#666" stroke-width="2.400"/></svg></div>
      <div class="map-btn peg"><svg viewBox="0 0 18 30" width="18" height="30"><circle cx="9" cy="5" r="5" fill="#fbbc2c" stroke="#e2942c" stroke-width=".6"/><path d="M4 10.500H14L17.500 19 15.500 21 13.500 18 13 29.500H9.800L9 21 8.200 29.500H5L4.500 18 2.500 21 .5 19z" fill="#fbbc2c" stroke="#e2942c" stroke-width=".6"/><path d="M6 10.500h6l-3 3.500z" fill="#e98a2c"/></svg></div>
      <div class="google"><i class="b">G</i><i class="r">o</i><i class="y">o</i><i class="b">g</i><i class="n">l</i><i class="r">e</i></div>
      <div class="credits"><span>Keyboard shortcuts</span><span>Map data ©2025 Google, INEGI</span><span>Terms</span><span>Report a map error</span></div>
    </div>

    <div class="search"><svg class="icon s20"><use href="#i-search"/></svg><span>Search by city, zip code, or dealer name...</span></div>
    <div class="count">4 dealers found near you</div>

    <div class="list-wrap">
      <div class="list">
        <article class="dealer">
          <div class="dealer-head"><h3>Los Angeles Downtown</h3><svg class="icon s24"><use href="#i-right"/></svg></div>
          <div class="chips"><span class="rating"><svg><use href="#i-star"/></svg>4.8</span><span class="dist">2.3 miles</span></div>
          <ul><li><svg class="icon s18"><use href="#i-pin"/></svg>1234 Performance Drive, Los Angeles, CA 90210</li><li class="tel"><svg class="icon s18"><use href="#i-phone"/></svg>+1 (310) 555-0100</li><li><svg class="icon s18"><use href="#i-clock"/></svg>Mon-Sat: 9AM-8PM</li></ul>
          <div class="btns"><a class="dir"><svg class="icon s16"><use href="#i-nav"/></svg>Directions</a><a class="contact">Contact</a></div>
        </article>
        <article class="dealer">
          <div class="dealer-head"><h3>Beverly Hills Showroom</h3><svg class="icon s24"><use href="#i-right"/></svg></div>
          <div class="chips"><span class="rating"><svg><use href="#i-star"/></svg>4.9</span><span class="dist">5.7 miles</span></div>
          <ul><li><svg class="icon s18"><use href="#i-pin"/></svg>9876 Rodeo Drive, Beverly Hills, CA 90212</li><li class="tel"><svg class="icon s18"><use href="#i-phone"/></svg>+1 (310) 555-0200</li><li><svg class="icon s18"><use href="#i-clock"/></svg>Mon-Sat: 9AM-8PM</li></ul>
          <div class="btns"><a class="dir"><svg class="icon s16"><use href="#i-nav"/></svg>Directions</a><a class="contact">Contact</a></div>
        </article>
        <article class="dealer"></article>
      </div>
      <div class="thumb"></div>
    </div>
  </section>

  <section class="contact-section">
    <div class="touch">
      <h2>Get in Touch</h2>
      <p class="lead">Have questions? Our team of specialists is ready to assist you with any inquiries about our vehicles, services, or to schedule a personalized consultation.</p>
      <div class="info"><span class="disc"><svg class="icon s20"><use href="#i-phone"/></svg></span><div><h4>Phone</h4><p>Monday - Friday, 9AM - 6PM EST</p><a>+1 (800) 555-1234</a></div></div>
      <div class="info"><span class="disc"><svg class="icon s20"><use href="#i-mail"/></svg></span><div><h4>Email</h4><p>We'll respond within 24 hours</p><a>contact@supercar.com</a></div></div>
      <div class="info"><span class="disc"><svg class="icon s20"><use href="#i-pin"/></svg></span><div><h4>Headquarters</h4><p>1234 Performance Drive<br>Los Angeles, CA 90210<br>United States</p></div></div>
      <div class="info"><span class="disc"><svg class="icon s20"><use href="#i-clock"/></svg></span><div class="hours"><h4>Business Hours</h4><p>Monday - Friday: 9:00 AM - 6:00 PM</p><p>Saturday: 10:00 AM - 4:00 PM</p><p>Sunday: Closed</p></div></div>
    </div>
    <form class="form">
      <div class="form-head"><h2>Request Information</h2><p>Our team will contact you shortly to provide details or schedule a private consultation.</p></div>
      <div class="row"><div class="field"><label>First Name *</label><div class="input">John</div></div><div class="field"><label>Last Name *</label><div class="input">Doe</div></div></div>
      <div class="field"><label>Email *</label><div class="input">john.doe@email.com</div></div>
      <div class="field"><label>Phone Number</label><div class="input">+1 (234) 567-890</div></div>
      <div class="field"><label>I'm Interested In *</label><div class="input select">Choose an option<svg class="icon s16"><use href="#i-down"/></svg></div></div>
      <div class="field"><label>Message *</label><div class="input area">Tell us about your interests and specific questions...</div></div>
      <p class="legal">By submitting this form, you agree to our <u>privacy policy</u> and consent to be contacted by our team.</p>
      <a class="send"><svg class="icon s16"><use href="#i-send"/></svg>Send Message</a>
    </form>
  </section>
</main>
</body>
</html>
```
FILE: styles.css
```css
*{box-sizing:border-box;margin:0;padding:0}
html{background:#000;overflow:hidden}
body{width:1308px;height:3198px;zoom:1.2808;background:#000;color:#f8f8f8;font-family:Inter,"Liberation Sans",sans-serif;font-size:14px;line-height:20px;overflow:hidden}
.defs{display:block;height:0}
ul{list-style:none}
.icon{fill:none;stroke:currentColor;stroke-width:2;stroke-linecap:round;stroke-linejoin:round;flex:none;display:block}
.s16{width:16px;height:16px}.s18{width:18px;height:18px}.s20{width:20px;height:20px}.s24{width:24px;height:24px}

/* header */
.header{position:relative;height:80px;display:grid;grid-template-columns:411px auto 1fr;align-items:center;padding:0 32px 0 60px}
.edge-glow{position:absolute;left:0;top:0;width:28px;height:80px;background:radial-gradient(ellipse 14px 42px at 28px 36px,rgba(255,150,0,.2),transparent)}
.brand{display:flex;align-items:center;gap:12px}
.logo{width:48px;height:48px;border-radius:4px;background:linear-gradient(135deg,#ffc800,#ff6600);box-shadow:0 4px 20px rgba(255,149,0,.4);color:#000;font-size:24px;font-weight:900;display:flex;align-items:center;justify-content:center}
.brand-text{display:flex;flex-direction:column}
.brand-text b{font-size:20px;line-height:28px;letter-spacing:-.5px;color:#fff}
.brand-text span{font-size:10px;line-height:12px;letter-spacing:2px;color:#6f6f7a}
.nav{display:flex;gap:24px;font-weight:500;color:#d0d0d0}
.actions{display:flex;justify-content:flex-end;align-items:center;gap:12px;color:#d4d4d4}
.icon-btn{width:36px;height:36px;display:flex;align-items:center;justify-content:center}
.build{width:116.400px;height:40px;text-align:center;border-radius:4px;background:linear-gradient(90deg,#ffc800,#ff9500 60%,#ff6600);color:#000;font-weight:500;line-height:40px}

.main{width:1280px;height:3118px;background:linear-gradient(#000 15%,#020202 75%)}
.hero{padding:54.5px 32px 0}
.eyebrow{display:flex;align-items:center;gap:8px;color:#edb54c;font-weight:500;letter-spacing:.7px;margin-bottom:24px}
.eyebrow i{width:48px;height:1px;background:#e6bd62}
h1{font-size:72px;line-height:72px;font-weight:700}
h1 span{color:#e6bd62}
.hero p{width:700px;margin-top:24.600px;font-size:18px;line-height:29.25px;color:#b3b3b3}

/* dealer finder */
.dealers{padding:178px 32px 0}
.section-head{overflow:hidden;text-align:center;height:134.100px}
.section-head h2{margin:-34.400px auto 16.500px;width:672px;font-size:48px;line-height:48px;font-weight:700;background:linear-gradient(90deg,#d6b05b,#a0833f);-webkit-background-clip:text;background-clip:text;color:transparent}
.section-head p{width:640px;margin:0 auto;font-size:18px;line-height:28px;color:#a8a8a8}

.map{position:relative;height:699px;border-radius:16px;overflow:hidden;background:#84d6eb;font-family:Roboto,sans-serif}
.map-art{display:block;width:100%;height:100%}
.terrain .lg{fill:#cef5e2}.gr{fill:#adefcb}.tan{fill:#f2e7d5}.ur{fill:#f6f6f7}.base{fill:#e0e2e8}.grey{fill:#c9cec9}.wt{fill:#84d6eb}
.rd path{fill:none;stroke:#a3b3d5;stroke-width:2px;vector-effect:non-scaling-stroke;stroke-linejoin:round}
.rd.thin path{stroke:#bac7df;stroke-width:1.200px}
.rd.wide path{stroke:#9dafd2;stroke-width:3px}
.rsv path{fill:none;stroke:#b9c4bd;stroke-width:1px;vector-effect:non-scaling-stroke}
.dots circle{fill:#fff;stroke:#555;stroke-width:1.100}
.lb{font-size:12.100px;fill:#33363b;stroke:#fff;stroke-width:2px;paint-order:stroke;stroke-linejoin:round}
.lb .e{text-anchor:end}
.lb.md{font-size:14.600px;font-weight:500;fill:#222528}
.lb.lgc{font-size:17.800px;font-weight:500;fill:#222528}
.lb .mx{font-size:16px}
.lb.park{font-size:13.800px;fill:#1f8a5d;text-anchor:middle}
.salton{font-size:13px;fill:#17829b;text-anchor:middle}
.sh{font-size:9.500px;font-weight:700;fill:#fff;text-anchor:middle}
.sh.dark{fill:#40454c;font-weight:500}
.map-type{position:absolute;left:10px;top:10px;width:168px;height:40px;border-radius:2px;background:#fff;box-shadow:0 1px 4px rgba(0,0,0,.3);display:flex;font-size:18px;line-height:40px;text-align:center;color:#565656}
.map-type b{width:70px;font-weight:500;color:#000;border-right:1px solid #e6e6e6}
.map-type span{flex:1}
.map-btn{position:absolute;left:1165.500px;width:40px;height:40px;border-radius:2px;background:#fff;box-shadow:0 1px 4px rgba(0,0,0,.3);display:flex;align-items:center;justify-content:center}
.full{top:10px}.pan{top:563px;border-radius:50%}.peg{top:635px}
.google{position:absolute;left:11px;top:673px;font:600 19px/24px "Open Sans",sans-serif;letter-spacing:-1.300px;text-shadow:0 0 2px #fff,0 0 2px #fff}
.google i{font-style:normal}
.google .b{color:#4285f4}.google .r{color:#ea4335}.google .y{color:#fbbc05}.google .n{color:#34a853}
.credits{position:absolute;right:0;bottom:0;height:14px;padding:0 5px;display:flex;gap:12.500px;background:rgba(245,245,245,.75);color:#111;font-size:10px;line-height:14px;white-space:nowrap}

.search{margin-top:32.300px;height:52px;border:2px solid #0a0a0a;border-radius:6px;background:#030303;display:flex;align-items:center;gap:14px;padding:0 14px;color:#b0b0b0}
.count{margin:12px 0 23.700px;padding-left:4px;font-size:12px;line-height:16px;color:#a6a6a6}
.list-wrap{display:flex;justify-content:space-between;align-items:flex-start;height:580px;overflow:hidden}
.list{width:1200px;display:flex;flex-direction:column;gap:16px}
.thumb{width:8px;height:301px;border-radius:4px;background:#222}
.dealer{height:266.600px;flex:none;border:2px solid #0c0c0c;border-radius:6px;background:#060606;padding:24.300px}
.dealer-head{display:flex;justify-content:space-between;align-items:flex-start;height:28px}
.dealer h3{font-size:20px;line-height:29px;font-weight:700;color:#fafafa}
.dealer-head svg{color:#b3b3b3}
.chips{display:flex;gap:8px;margin:8px 0 17.500px;color:#e6bd62;line-height:28px;font-weight:500}
.chips span{height:28px;padding:0 12px;border-radius:14px;background:#1b170f}
.chips .rating{display:flex;align-items:center;gap:4px;padding:0 8px;border-radius:2px;font-weight:600}
.rating svg{width:14px;height:14px;fill:#e6bd62}
.dealer ul{display:flex;flex-direction:column;gap:12.800px;color:#b0b0b0}
.dealer li{display:flex;align-items:center;gap:12px}
.dealer li svg{color:#e6bd62}
.dealer .tel{color:#c0c0c0;font-weight:500}
.btns{display:grid;grid-template-columns:1fr 1fr;gap:12px;margin-top:15.500px;font-weight:500}
.btns a{height:32px;border-radius:2px;display:flex;align-items:center;justify-content:center;gap:14px}
.dir{border:2px solid #0b0b0b;background:#040404}
.contact{background:#e6bd62;color:#0a0a0a;box-shadow:0 8px 16px -2px rgba(230,189,98,.32)}

/* contact */
.contact-section{display:grid;grid-template-columns:576px 576px;gap:64px;padding:176.300px 32px 0;align-items:start}
.touch h2{font-size:36px;line-height:40px;font-weight:700;margin-bottom:24px}
.lead{font-size:16px;line-height:26px;color:#b3b3b3;margin-bottom:32px}
.info{display:flex;gap:16px;padding:24px;border:1px solid #111;border-radius:6px;background:#060606;margin-bottom:23.800px}
.disc{width:48px;height:48px;border-radius:50%;background:#1b170f;color:#e6bd62;display:flex;align-items:center;justify-content:center}
.info h4{font-size:16px;line-height:24px;font-weight:600;color:#fff;margin-bottom:4px}
.info p{color:#b0b0b0}
.info a{display:block;margin-top:8px;font-size:16px;line-height:24px;color:#edb54c}
.hours p+p{margin-top:4px}
.form{border:1px solid #0a0a0a;border-radius:16px;background:#010101;padding:40px;display:flex;flex-direction:column;gap:24px}
.form-head{text-align:center;margin-bottom:32px;color:#a8a8a8}
.form-head h2{font-size:30px;line-height:36px;font-weight:700;letter-spacing:-.75px;color:#f8f8f8;margin-bottom:8px}
.row{display:grid;grid-template-columns:1fr 1fr;gap:24px}
.field{display:flex;flex-direction:column;gap:8px;align-items:stretch}
label{font-weight:500}
.input{height:36px;border:1px solid #0b0b0b;border-radius:6px;background:#040404;padding:0 12px;line-height:34px;color:#a8a8a8}
.select{width:165px;display:flex;align-items:center;justify-content:space-between}
.select svg{color:#6a6a6a}
.area{height:64px;padding-top:8px;line-height:20px}
.legal{font-size:12px;line-height:19.500px;color:#b0b0b0}
.send{height:40px;border-radius:6px;background:#e6bd62;color:#0a0a0a;font-weight:500;display:flex;align-items:center;justify-content:center;gap:16px}
```
